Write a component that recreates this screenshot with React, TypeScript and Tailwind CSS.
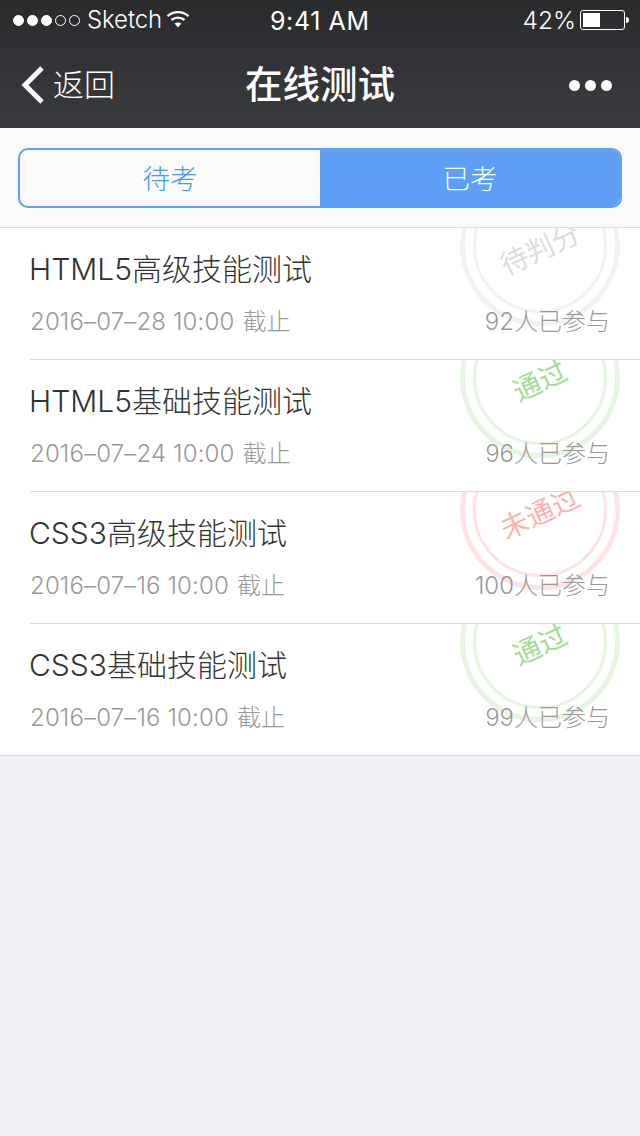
const FONT = "font-['Inter','Noto_Sans_CJK_SC',sans-serif]";

function Stamp({ label, ring, text }: { label: string; ring: string; text: string }) {
  return (
    <div className="absolute left-[460px] top-[-62px] w-[160px] h-[160px]">
      <div className={`w-full h-full rounded-full border-[5px] p-[8px] ${ring}`}>
        <div className={`w-full h-full rounded-full border-[3px] ${ring}`} />
      </div>
      <div className={`absolute left-0 right-0 top-[65px] text-center text-[28px] leading-[36px] font-normal -rotate-[25deg] ${text}`}>
        {label}
      </div>
    </div>
  );
}

const rows = [
  { t: "HTML5高级技能测试", d: "2016–07–28 10:00", n: "92人已参与", s: "待判分", ring: "border-[#f2f2f2]", text: "text-[#dcdcdc]" },
  { t: "HTML5基础技能测试", d: "2016–07–24 10:00", n: "96人已参与", s: "通过", ring: "border-[#e6f5e1]", text: "text-[#a5dc96]" },
  { t: "CSS3高级技能测试", d: "2016–07–16 10:00", n: "100人已参与", s: "未通过", ring: "border-[#fde3e3]", text: "text-[#fdb2b2]" },
  { t: "CSS3基础技能测试", d: "2016–07–16 10:00", n: "99人已参与", s: "通过", ring: "border-[#e6f5e1]", text: "text-[#a5dc96]" },
];

export default function App() {
  return (
    <div className={`w-[640px] h-[1136px] bg-[#efeff4] overflow-hidden ${FONT}`}>
      <div className="h-[128px] bg-gradient-to-b from-[#2a2b2d] to-[#3a3b3f] text-white">
        <div className="h-[40px] relative flex items-center pl-[13px] pr-[11px] text-[24px] font-light">
          <div className="flex items-center gap-[3px]">
            {[1, 1, 1, 0, 0].map((f, i) => (
              <span key={i} className={`w-[11px] h-[11px] rounded-full border border-white ${f ? "bg-white" : ""}`} />
            ))}
          </div>
          <span className="ml-[7px] leading-[42px] tracking-[-0.1px]">Sketch</span>
          <svg width="24" height="18" viewBox="0 0 24 18" className="ml-[4px] mb-[2px]" fill="none" stroke="white" strokeWidth="2.4">
            <path d="M1.5 6.2C7.5 0.8 16.5 0.8 22.5 6.2" />
            <path d="M5.5 10C9.2 6.8 14.8 6.8 18.5 10" />
            <path d="M12 17.5 L8.6 13.6C10.6 12.1 13.4 12.1 15.4 13.6Z" fill="white" stroke="none" />
          </svg>
          <span className="absolute left-[270px] top-0 text-[25px] leading-[43px] font-normal tracking-[0.6px]">9:41 AM</span>
          <div className="ml-auto flex items-center">
            <span className="text-[24.5px] leading-[40px]">42%</span>
            <div className="ml-[4px] w-[45px] h-[20px] rounded-[3px] border border-white p-[2px]">
              <div className="w-[17px] h-full bg-white" />
            </div>
            <div className="w-[3px] h-[6px] bg-white rounded-r-[3px] ml-[1px]" />
          </div>
        </div>
        <div className="h-[88px] relative flex items-center justify-between pl-[21px] pr-[28px] pt-[2px]">
          <div className="flex items-center">
            <svg width="24" height="38" viewBox="0 0 24 38" fill="none" stroke="white" strokeWidth="5">
              <path d="M21 2 L4 19 L21 36" />
            </svg>
            <span className="ml-[8px] text-[31px] font-light leading-[40px]">返回</span>
          </div>
          <span className="absolute left-0 right-0 text-center text-[37.5px] font-medium leading-[48px]">在线测试</span>
          <div className="flex items-center gap-[5px]">
            <span className="w-[11px] h-[11px] rounded-full bg-white" />
            <span className="w-[11px] h-[11px] rounded-full bg-white" />
            <span className="w-[11px] h-[11px] rounded-full bg-white" />
          </div>
        </div>
      </div>

      <div className="h-[100px] bg-[#fafafa] border-b border-[#dcdcdc] pt-[20px] px-[18px]">
        <div className="h-[60px] flex rounded-[10px] border-2 border-[#5c9ff4] overflow-hidden text-[27.5px] font-light">
          <div className="w-[300px] pt-[3px] flex items-center justify-center text-[#4a96f2]">待考</div>
          <div className="flex-1 pt-[3px] flex items-center justify-center bg-[#5c9ff4] text-white">已考</div>
        </div>
      </div>

      <div className="bg-white border-b border-[#d9d9d9]">
        {rows.map((r, i) => (
          <div key={i} className={`relative overflow-hidden pl-[30px] ${i < 3 ? "h-[132px]" : "h-[131px]"}`}>
            <Stamp label={r.s} ring={r.ring} text={r.text} />
            <div className={`relative h-full pr-[30px] pt-[20px] ${i < 3 ? "border-b border-[#dcdcdc]" : ""}`}>
              <div className="ml-[-1px] text-[30px] leading-[42px] text-[#333] font-light">{r.t}</div>
              <div className="mt-[16px] flex justify-between text-[24px] leading-[32px] text-[#999] font-light">
                <span className="tracking-[0.15px]">{r.d}<span className="ml-[8px]">截止</span></span>
                <span>{r.n}</span>
              </div>
            </div>
          </div>
        ))}
      </div>
    </div>
  );
}
